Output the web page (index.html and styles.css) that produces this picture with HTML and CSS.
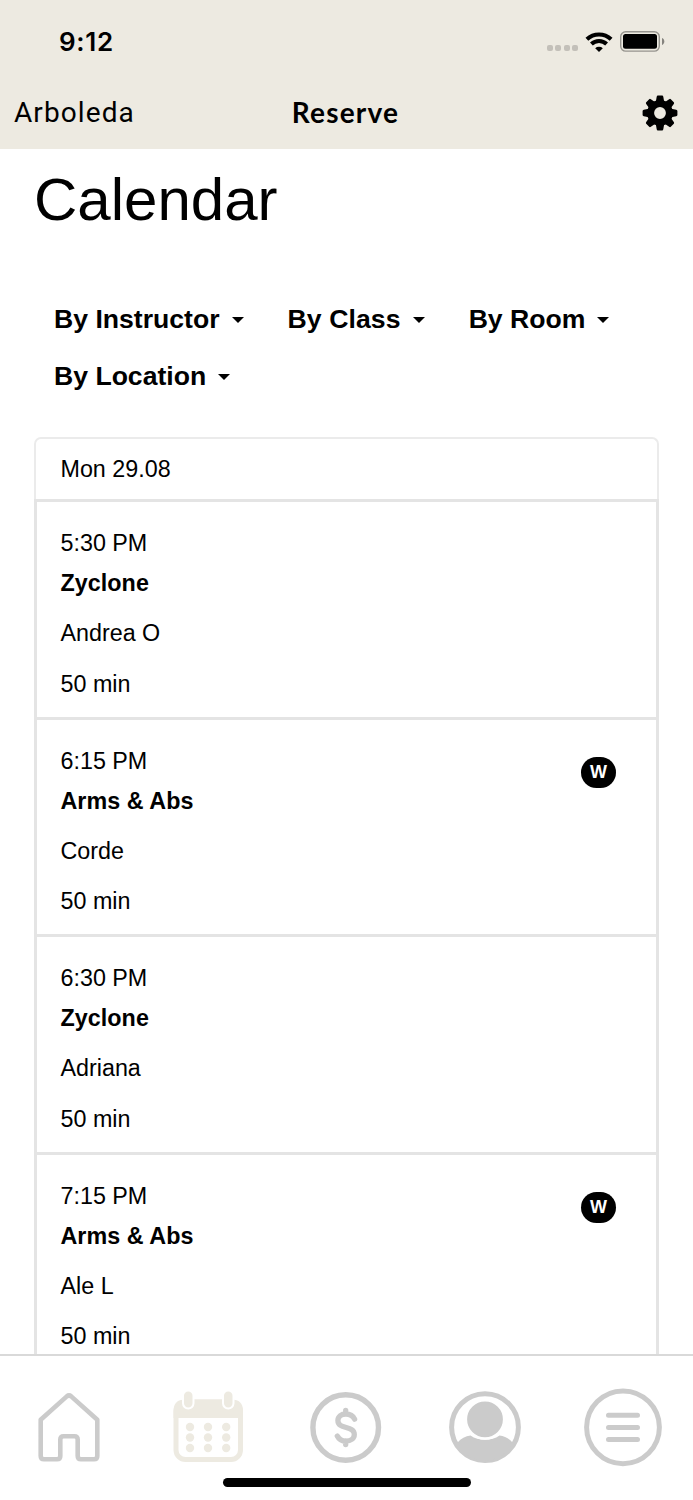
FILE: index.html
```
<!DOCTYPE html>
<html lang="en">
<head>
    <meta charset="UTF-8">
    <meta name="viewport" content="width=device-width, initial-scale=1.0">
    <title>Reserve</title>
    <link rel="stylesheet" href="styles.css">
</head>
<body>
    <header class="top">
        <div class="status-bar">
            <span class="clock">9:12</span>
            <div class="status-icons">
                <div class="signal"><i></i><i></i><i></i><i></i></div>
                <svg class="wifi" width="28" height="20" viewBox="0 0 28 20">
                    <g fill="none" stroke="#000" stroke-width="4">
                        <path d="M1.900 7.300a17.400 17.400 0 0 1 24.200 0"/>
                        <path d="M6.400 12a10.900 10.900 0 0 1 15.200 0"/>
                    </g>
                    <path d="M14 20l-3.800-3.700a5.600 5.600 0 0 1 7.600 0z"/>
                </svg>
                <svg class="battery" width="45" height="21" viewBox="0 0 45 21">
                    <rect x="0.700" y="0.700" width="38.600" height="19.400" rx="5" fill="none" stroke="#96948e" stroke-width="1.400"/>
                    <rect x="3" y="3" width="34" height="14.800" rx="2.500"/>
                    <path d="M42 7v7c1.400-.6 2.300-1.900 2.300-3.500S43.400 7.600 42 7z" fill="#85837e"/>
                </svg>
            </div>
        </div>
        <nav class="title-bar">
            <span class="studio">Arboleda</span>
            <h2>Reserve</h2>
            <svg class="gear" width="36" height="36" viewBox="-18 -18 36 36">
                <defs><path id="tooth" d="M-4.400-10l1.100-6.200q.2-1.200 1.200-1.200h4.200q1 0 1.200 1.200l1.100 6.200z"/></defs>
                <circle r="9.400" fill="none" stroke="#000" stroke-width="7"/>
                <use href="#tooth"/>
                <use href="#tooth" transform="rotate(45)"/>
                <use href="#tooth" transform="rotate(90)"/>
                <use href="#tooth" transform="rotate(135)"/>
                <use href="#tooth" transform="rotate(180)"/>
                <use href="#tooth" transform="rotate(225)"/>
                <use href="#tooth" transform="rotate(270)"/>
                <use href="#tooth" transform="rotate(315)"/>
            </svg>
        </nav>
    </header>

    <main>
        <h1>Calendar</h1>
        <div class="filters">
            <button>By Instructor</button>
            <button>By Class</button>
            <button>By Room</button>
            <button>By Location</button>
        </div>

        <section class="day">
            <div class="day-head">Mon 29.08</div>
            <div class="class-item">
                <p class="time">5:30 PM</p>
                <p class="name">Zyclone</p>
                <p>Andrea O</p>
                <p>50 min</p>
            </div>
            <div class="class-item">
                <span class="badge">W</span>
                <p class="time">6:15 PM</p>
                <p class="name">Arms &amp; Abs</p>
                <p>Corde</p>
                <p>50 min</p>
            </div>
            <div class="class-item">
                <p class="time">6:30 PM</p>
                <p class="name">Zyclone</p>
                <p>Adriana</p>
                <p>50 min</p>
            </div>
            <div class="class-item">
                <span class="badge">W</span>
                <p class="time">7:15 PM</p>
                <p class="name">Arms &amp; Abs</p>
                <p>Ale L</p>
                <p>50 min</p>
            </div>
        </section>
    </main>

    <footer class="tab-bar">
        <div class="tabs">
            <a class="tab">
                <svg width="80" height="80" viewBox="0 0 80 80">
                    <path d="M37.800 9.400L11.700 32.800V69q0 3.300 3.300 3.300H28q3.300 0 3.300-3.300V52.500q0-3.300 3.300-3.300h10.800q3.300 0 3.300 3.300V69q0 3.300 3.300 3.300h13q3.300 0 3.300-3.300V32.800L42.200 9.400q-2.200-1.800-4.400 0z" fill="none" stroke="currentColor" stroke-width="4.600" stroke-linejoin="round"/>
                </svg>
            </a>
            <a class="tab active">
                <svg width="80" height="80" viewBox="0 0 80 80">
                    <rect x="8" y="15" width="64.500" height="57.500" rx="9.500" fill="none" stroke="currentColor" stroke-width="5"/>
                    <path d="M5.500 31V24q0-11.500 11.500-11.500h46.500q11.500 0 11.500 11.500v7z" fill="currentColor"/>
                    <g fill="currentColor" stroke="#fff" stroke-width="2">
                        <rect x="15" y="3.500" width="10.500" height="18" rx="5.200"/>
                        <rect x="55" y="3.500" width="10.500" height="18" rx="5.200"/>
                    </g>
                    <g fill="currentColor">
                        <circle cx="22" cy="40" r="4.200"/><circle cx="40" cy="40" r="4.200"/><circle cx="58.200" cy="40" r="4.200"/>
                        <circle cx="22" cy="50.500" r="4.200"/><circle cx="40" cy="50.500" r="4.200"/><circle cx="58.200" cy="50.500" r="4.200"/>
                        <circle cx="22" cy="61" r="4.200"/><circle cx="40" cy="61" r="4.200"/><circle cx="58.200" cy="61" r="4.200"/>
                    </g>
                </svg>
            </a>
            <a class="tab">
                <svg width="80" height="80" viewBox="0 0 80 80" fill="none" stroke="currentColor">
                    <circle cx="39.700" cy="40.500" r="32.800" stroke-width="5.400"/>
                    <path d="M48.600 32.200c-1.600-3.400-4.600-5.200-8.700-5.200-4.700 0-8 2.700-8 6.500 0 9.500 16.400 4.600 16.400 14 0 3.900-3.500 6.600-8.400 6.600-3.900 0-7-1.900-8.600-5.100M39.700 23.500V27M39.700 54v3.500" stroke-width="5.300" stroke-linecap="round"/>
                </svg>
            </a>
            <a class="tab">
                <svg width="80" height="80" viewBox="0 0 80 80">
                    <circle cx="40" cy="40.200" r="33.400" fill="none" stroke="currentColor" stroke-width="5"/>
                    <path d="M25.500 48.500c-5 .5-9.500 2.900-13 7C18 67.500 28 73.500 40 73.500s22-6 27.500-18c-3.500-4.100-8-6.500-13-7-8 5.800-21 5.800-29 0z" fill="currentColor"/>
                    <circle cx="40" cy="32.300" r="19.200" fill="currentColor" stroke="#fff" stroke-width="2.600"/>
                </svg>
            </a>
            <a class="tab">
                <svg width="80" height="80" viewBox="0 0 80 80" fill="none" stroke="currentColor" stroke-width="5">
                    <circle cx="39" cy="40.300" r="36.400"/>
                    <path d="M24.500 28.300h29M24.500 40.400h29M24.500 52.500h29" stroke-linecap="round"/>
                </svg>
            </a>
        </div>
        <div class="home-indicator"></div>
    </footer>
</body>
</html>
```
FILE: styles.css
```
* {
    box-sizing: border-box;
}

body {
    margin: 0;
    height: 1500px;
    display: flex;
    flex-direction: column;
    overflow: hidden;
    background: #fff;
    color: #000;
    font-family: 'Liberation Sans', Arial, sans-serif;
}

h1, h2, p {
    margin: 0;
}

/* Header */
.top {
    height: 149px;
    flex-shrink: 0;
    background: #edeae1;
}

.status-bar {
    height: 83px;
    padding: 0 28px 0 59px;
    display: flex;
    justify-content: space-between;
    align-items: center;
}

.clock {
    font: 600 26px Inter, sans-serif;
    letter-spacing: 0.7px;
}

.status-icons {
    display: flex;
    align-items: center;
}

.signal {
    display: flex;
    gap: 2.4px;
    padding-top: 13px;
    margin-right: 7px;
}

.signal i {
    width: 6px;
    height: 6px;
    border-radius: 2px;
    background: #c3c0b9;
}

.wifi {
    margin-right: 7px;
}

.title-bar {
    height: 60px;
    padding: 0 15px 0 14px;
    display: grid;
    grid-template-columns: 1fr auto 1fr;
    align-items: center;
}

.studio {
    font: 400 28px Roboto, sans-serif;
    letter-spacing: 1.1px;
    padding-bottom: 2px;
}

.title-bar h2 {
    font: 700 28px Lato, sans-serif;
    letter-spacing: 1.2px;
    padding: 0 1px 2px 0;
}

.gear {
    justify-self: end;
}

/* Calendar */
main {
    flex: 1;
    min-height: 0;
    overflow: hidden;
    padding: 16px 34px 0;
}

h1 {
    font-size: 60px;
    font-weight: 400;
    line-height: 70px;
}

.filters {
    display: flex;
    flex-wrap: wrap;
    column-gap: 44px;
    margin: 56px 0 32px 20px;
}

.filters button {
    display: flex;
    align-items: center;
    gap: 12px;
    height: 57px;
    padding: 0;
    border: none;
    background: none;
    color: #000;
    font: bold 26.6px 'Liberation Sans', Arial, sans-serif;
}

.filters button::after {
    content: '';
    margin-top: 1px;
    border: 6.5px solid transparent;
    border-top-color: #000;
    border-bottom: 0;
}

.filters button:nth-child(2) {
    letter-spacing: 0.1px;
}

.day-head {
    height: 62px;
    padding-left: 24.5px;
    border: 2px solid #ebebeb;
    border-bottom: 0;
    border-radius: 7px 7px 0 0;
    font-size: 23.3px;
    line-height: 61px;
}

.class-item {
    position: relative;
    height: 217.6px;
    padding: 21px 24px 0 23.5px;
    border: 3px solid #e4e4e4;
    border-bottom: 0;
    font-size: 23.3px;
    line-height: 40px;
}

.class-item p {
    margin-bottom: 10.3px;
}

.class-item .time {
    margin-bottom: 0;
}

.class-item .name {
    font-weight: bold;
    letter-spacing: 0.05px;
}

.badge {
    position: absolute;
    top: 37px;
    right: 40px;
    width: 35px;
    height: 31px;
    border-radius: 16px;
    background: #000;
    color: #fff;
    font-size: 18px;
    font-weight: bold;
    line-height: 31px;
    text-align: center;
}

/* Bottom tabs */
.tab-bar {
    height: 146px;
    flex-shrink: 0;
    border-top: 2px solid #d9d9d9;
    background: #fff;
}

.tabs {
    display: grid;
    grid-template-columns: repeat(5, 1fr);
    padding-top: 31px;
}

.tab {
    display: flex;
    justify-content: center;
    color: #cbcbcb;
}

.tab.active {
    color: #edeae1;
}

.home-indicator {
    width: 248px;
    height: 9px;
    margin: 10.5px auto 0;
    border-radius: 5px;
    background: #000;
}
```
